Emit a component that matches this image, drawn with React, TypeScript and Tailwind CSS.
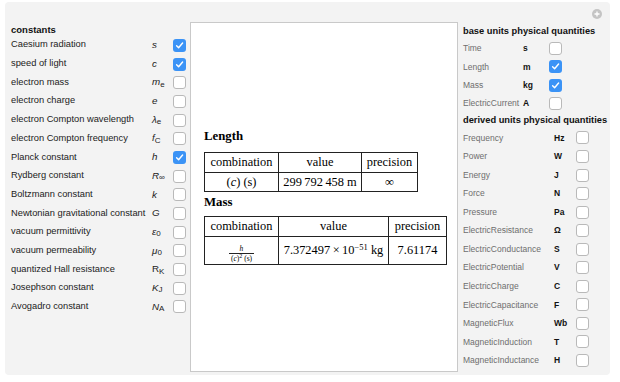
import { Fragment } from "react"

type Row = { label: string; sym: string; sub?: string; upright?: boolean; on: boolean }

const constants: Row[] = [
  { label: "Caesium radiation", sym: "s", on: true },
  { label: "speed of light", sym: "c", on: true },
  { label: "electron mass", sym: "m", sub: "e", on: false },
  { label: "electron charge", sym: "e", on: false },
  { label: "electron Compton wavelength", sym: "λ", sub: "e", on: false },
  { label: "electron Compton frequency", sym: "f", sub: "C", on: false },
  { label: "Planck constant", sym: "h", on: true },
  { label: "Rydberg constant", sym: "R", sub: "∞", on: false },
  { label: "Boltzmann constant", sym: "k", on: false },
  { label: "Newtonian gravitational constant", sym: "G", on: false },
  { label: "vacuum permittivity", sym: "ε", sub: "0", on: false },
  { label: "vacuum permeability", sym: "μ", sub: "0", on: false },
  { label: "quantized Hall resistance", sym: "R", sub: "K", upright: true, on: false },
  { label: "Josephson constant", sym: "K", sub: "J", on: false },
  { label: "Avogadro constant", sym: "N", sub: "A", on: false },
]

const baseUnits: [string, string, boolean][] = [
  ["Time", "s", false],
  ["Length", "m", true],
  ["Mass", "kg", true],
  ["ElectricCurrent", "A", false],
]

const derivedUnits: [string, string][] = [
  ["Frequency", "Hz"],
  ["Power", "W"],
  ["Energy", "J"],
  ["Force", "N"],
  ["Pressure", "Pa"],
  ["ElectricResistance", "Ω"],
  ["ElectricConductance", "S"],
  ["ElectricPotential", "V"],
  ["ElectricCharge", "C"],
  ["ElectricCapacitance", "F"],
  ["MagneticFlux", "Wb"],
  ["MagneticInduction", "T"],
  ["MagneticInductance", "H"],
]

function Box({ on }: { on: boolean }) {
  if (on) {
    return (
      <span className="w-[13px] h-[13px] rounded-[3px] bg-[#3b93f6] flex items-center justify-center">
        <svg width="9" height="9" viewBox="0 0 9 9">
          <path d="M1.6 4.8 L3.6 6.8 L7.6 2" stroke="white" strokeWidth="1.4" fill="none" strokeLinecap="round" strokeLinejoin="round" />
        </svg>
      </span>
    )
  }
  return <span className="w-[13px] h-[13px] rounded-[3px] bg-white border border-[#b9b9b9] block" />
}

export default function App() {
  return (
    <div className="w-[620px] h-[382px] bg-white pt-[2px] pl-[5px] font-['Liberation_Sans',Arial,sans-serif] relative">
      <div className="w-[605px] h-[373px] bg-[#f3f3f3] rounded-[4px] flex">
        {/* constants */}
        <div className="w-[185px] pl-[6px] pt-[22px]">
          <div className="h-[12px] leading-[12px] text-[9.5px] font-bold text-[#111]">constants</div>
          <div className="grid grid-cols-[141px_21px_13px]">
            {constants.map((c) => (
              <Fragment key={c.label}>
                <div className="h-[18.7px] flex items-center text-[9.3px] text-[#222] whitespace-nowrap">{c.label}</div>
                <div className={`h-[18.7px] flex items-center text-[9.8px] text-[#222] ${c.upright ? "" : "italic"}`}>
                  {c.sym}
                  {c.sub && <sub className="text-[8px] not-italic">{c.sub}</sub>}
                </div>
                <div className="h-[18.7px] flex items-center">
                  <Box on={c.on} />
                </div>
              </Fragment>
            ))}
          </div>
        </div>

        {/* result panel */}
        <div className="w-[268px] h-[350px] mt-[20px] bg-white border border-[#c9c9c9] pt-[105px] pl-[13px] font-['Liberation_Serif','Times_New_Roman',serif] text-[12.4px] text-black">
          <div className="h-[16px] leading-[16px] text-[12.8px] font-bold mb-[8px]">Length</div>
          <table className="border-collapse text-center">
            <tbody>
              <tr className="h-[19px]">
                <td className="border border-[#222] w-[74px] p-0">combination</td>
                <td className="border border-[#222] w-[83px] p-0">value</td>
                <td className="border border-[#222] w-[56px] p-0">precision</td>
              </tr>
              <tr className="h-[18px]">
                <td className="border border-[#222] p-0">
                  (<i>c</i>) (s)
                </td>
                <td className="border border-[#222] p-0">299&#8201;792&#8201;458 m</td>
                <td className="border border-[#222] p-0">∞</td>
              </tr>
            </tbody>
          </table>
          <div className="h-[16px] leading-[16px] text-[12.8px] font-bold mt-[2px] mb-[6px]">Mass</div>
          <table className="border-collapse text-center">
            <tbody>
              <tr className="h-[19px]">
                <td className="border border-[#222] w-[74px] p-0">combination</td>
                <td className="border border-[#222] w-[110px] p-0">value</td>
                <td className="border border-[#222] w-[58px] p-0">precision</td>
              </tr>
              <tr className="h-[28px]">
                <td className="border border-[#222] p-0">
                  <div className="inline-flex flex-col items-center text-[7.5px] leading-[8px]">
                    <span className="italic px-[2px]">h</span>
                    <span className="border-t border-[#222] px-[2px] pt-[1px]">
                      (<i>c</i>)<sup className="text-[6px]">2</sup> (s)
                    </span>
                  </div>
                </td>
                <td className="border border-[#222] p-0">
                  7.372497&#8201;×&#8201;10<sup className="text-[8.5px]">−51</sup> kg
                </td>
                <td className="border border-[#222] p-0">7.61174</td>
              </tr>
            </tbody>
          </table>
        </div>

        {/* units */}
        <div className="pl-[5px] pt-[23px] text-[8.5px] whitespace-nowrap">
          <div className="h-[12px] leading-[12px] text-[9.3px] font-bold text-[#111]">base units physical quantities</div>
          <div className="grid grid-cols-[60px_26px_13px] mt-[2.5px]">
            {baseUnits.map(([l, s, on]) => (
              <Fragment key={l}>
                <div className="h-[18.3px] flex items-center text-[#6e6e6e]">{l}</div>
                <div className="h-[18.3px] flex items-center font-bold text-[#111]">{s}</div>
                <div className="h-[18.3px] flex items-center">
                  <Box on={on} />
                </div>
              </Fragment>
            ))}
          </div>
          <div className="h-[12px] leading-[12px] text-[9.3px] font-bold text-[#111] mt-[1px]">derived units physical quantities</div>
          <div className="grid grid-cols-[91px_22px_13px] mt-[3px]">
            {derivedUnits.map(([l, s]) => (
              <Fragment key={l}>
                <div className="h-[18.55px] flex items-center text-[#6e6e6e]">{l}</div>
                <div className="h-[18.55px] flex items-center font-bold text-[#111]">{s}</div>
                <div className="h-[18.55px] flex items-center">
                  <Box on={false} />
                </div>
              </Fragment>
            ))}
          </div>
        </div>
      </div>

      {/* add button */}
      <div className="absolute left-[592px] top-[9px] w-[10px] h-[10px] rounded-full bg-[#c4c4c4] flex items-center justify-center">
        <svg width="6" height="6" viewBox="0 0 6 6">
          <path d="M3 0.5 V5.5 M0.5 3 H5.5" stroke="white" strokeWidth="1.3" />
        </svg>
      </div>
    </div>
  )
}
